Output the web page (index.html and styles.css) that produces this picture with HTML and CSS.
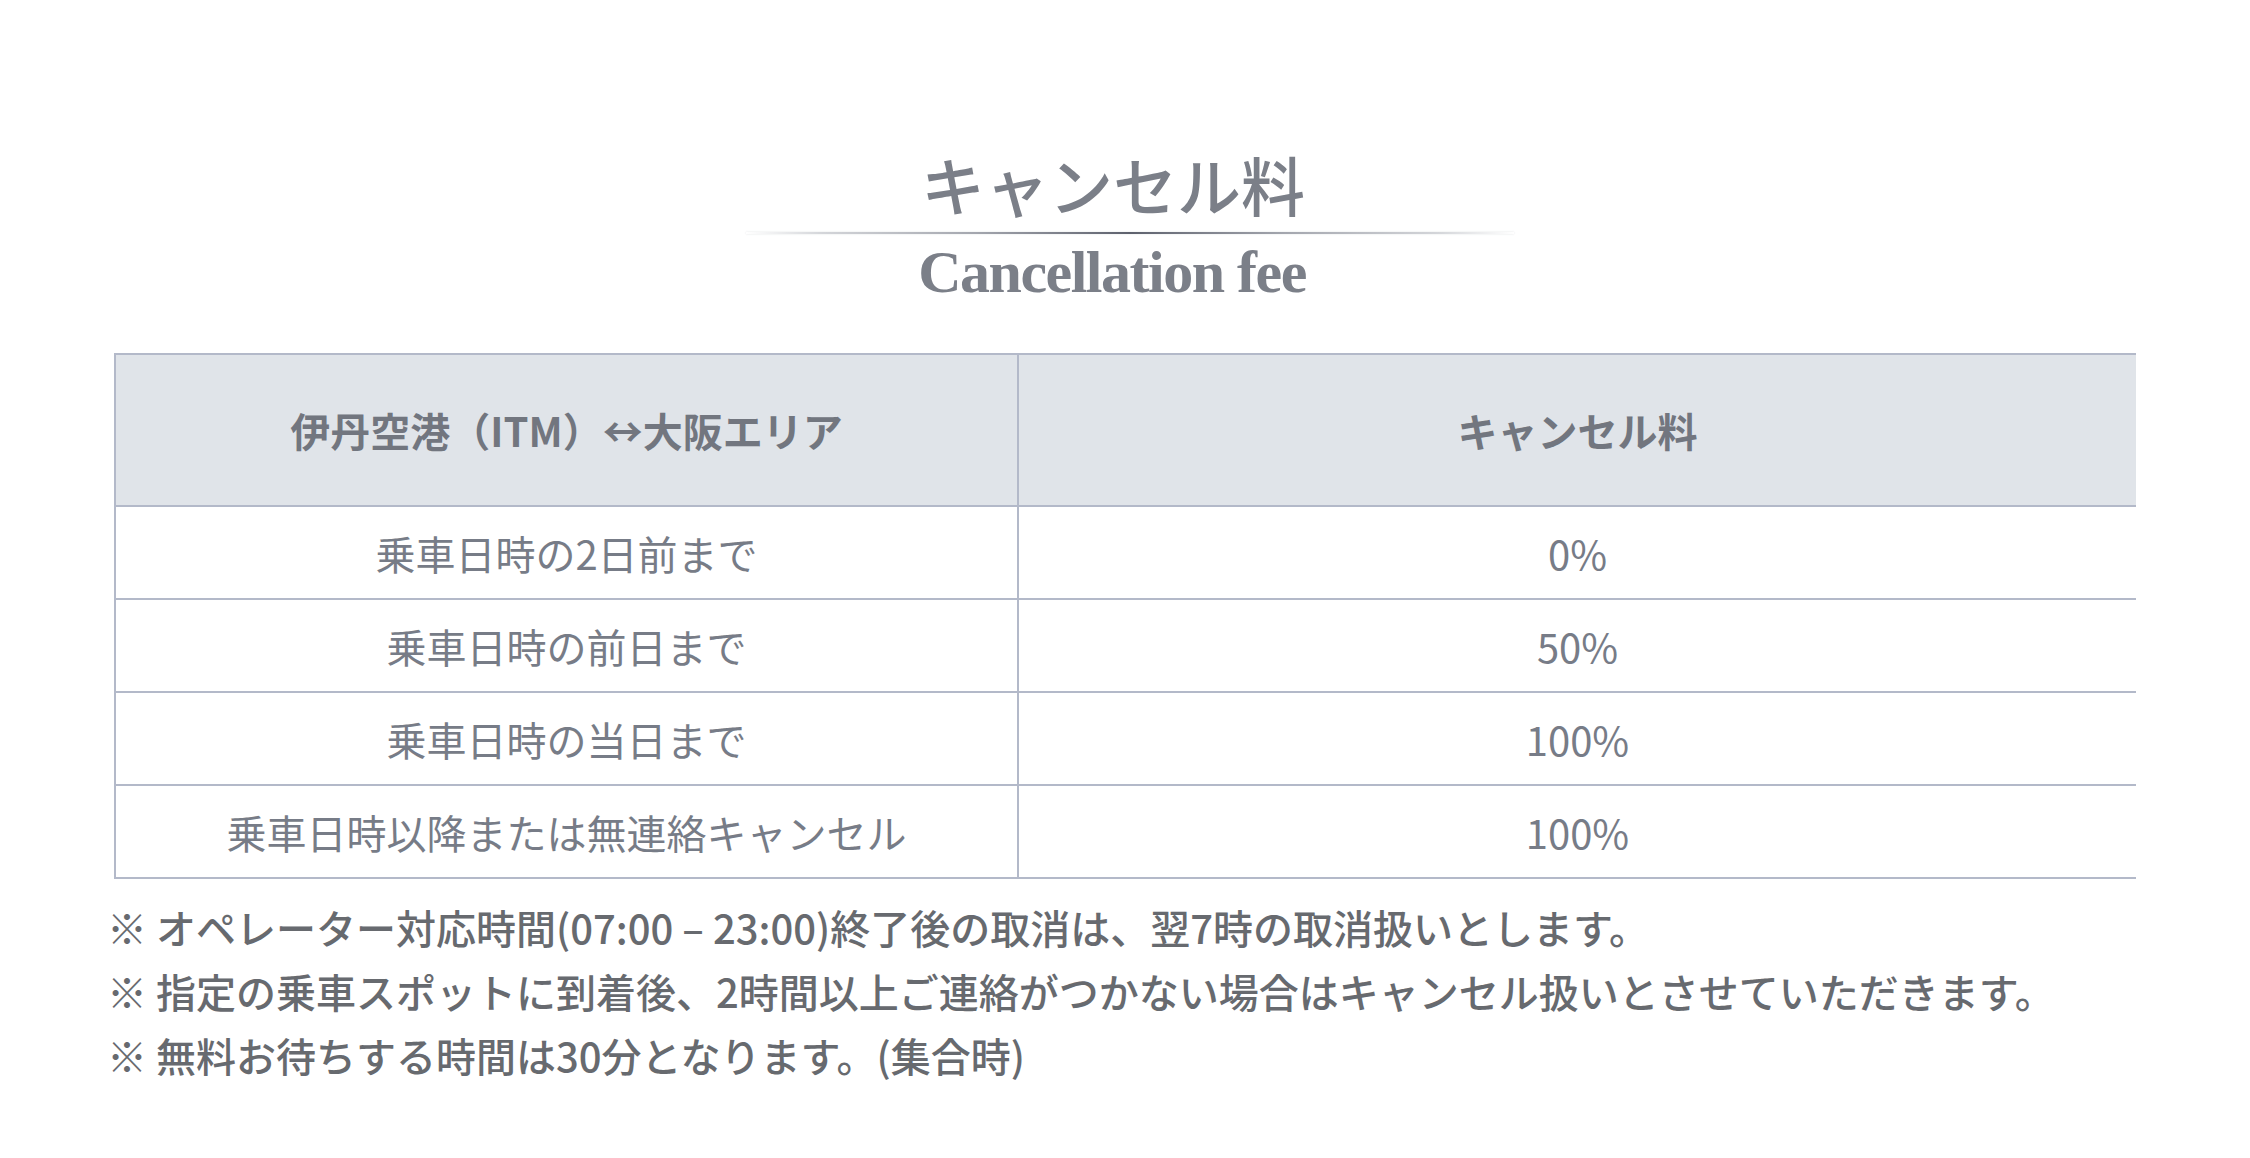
FILE: index.html
```html
<!DOCTYPE html>
<html lang="ja">
<head>
<meta charset="utf-8">
<title>キャンセル料</title>
<link rel="stylesheet" href="styles.css">
</head>
<body>
<section class="cancel">
  <header class="heading">
    <h2 class="heading-ja">キャンセル料</h2>
    <div class="heading-rule"></div>
    <p class="heading-en">Cancellation fee</p>
  </header>
  <div class="wrap">
    <table class="fee-table">
      <thead>
        <tr>
          <th class="col-a">伊丹空港（ITM）↔大阪エリア</th>
          <th class="col-b">キャンセル料</th>
        </tr>
      </thead>
      <tbody>
        <tr><td class="col-a">乗車日時の2日前まで</td><td class="col-b">0%</td></tr>
        <tr><td class="col-a">乗車日時の前日まで</td><td class="col-b">50%</td></tr>
        <tr><td class="col-a">乗車日時の当日まで</td><td class="col-b">100%</td></tr>
        <tr><td class="col-a">乗車日時以降または無連絡キャンセル</td><td class="col-b">100%</td></tr>
      </tbody>
    </table>
    <ul class="notes">
      <li>※ オペレーター対応時間(07:00 – 23:00)終了後の取消は、翌7時の取消扱いとします。</li>
      <li>※ 指定の乗車スポットに到着後、2時間以上ご連絡がつかない場合はキャンセル扱いとさせていただきます。</li>
      <li>※ 無料お待ちする時間は30分となります。(集合時)</li>
    </ul>
  </div>
</section>
</body>
</html>
```
FILE: styles.css
```css
html, body {
  margin: 0;
  padding: 0;
  background: #ffffff;
}
body {
  font-family: "Noto Sans CJK JP", "Noto Sans", sans-serif;
  color: #7a7f88;
}
.cancel {
  padding-top: 151px;
}
.heading {
  display: flex;
  flex-direction: column;
  align-items: center;
}
.heading-ja {
  margin: 0;
  padding-right: 24px;
  font-size: 64px;
  line-height: 64px;
  font-weight: 500;
  color: #7b7f88;
}
.heading-rule {
  margin-top: 17px;
  width: 768px;
  height: 2px;
  margin-left: 10px;
  background: linear-gradient(to right, rgba(200,200,205,0) 0%, #d3d5d9 10%, #a3a6ae 30%, #5d616d 50%, #a3a6ae 70%, #d3d5d9 90%, rgba(200,200,205,0) 100%);
  box-shadow: 0 0 2px rgba(90, 95, 110, 0.2);
}
.heading-en {
  margin: 8px 0 0;
  padding-right: 26px;
  font-family: "Liberation Serif", serif;
  font-weight: 700;
  font-size: 60px;
  line-height: 60px;
  letter-spacing: -1.5px;
  color: #7b7f88;
}
.wrap {
  margin-top: 51px;
  padding: 0 107px;
}
.fee-table {
  margin: 0 7px;
  width: calc(100% - 14px);
  border-collapse: collapse;
  table-layout: fixed;
}
.fee-table th,
.fee-table td {
  border: 2px solid #b3b9c9;
  text-align: center;
  vertical-align: middle;
  padding: 0;
  font-size: 40px;
}
.fee-table th {
  height: 150px;
  background: #e0e4e9;
  font-weight: 700;
  color: #72767f;
}
.fee-table td {
  height: 91px;
  font-weight: 400;
  color: #777c87;
}
.fee-table .col-a {
  width: 901px;
}
.fee-table .col-b {
  border-right: none;
}
.notes {
  list-style: none;
  margin: 16px 0 0;
  padding: 0;
  font-size: 40px;
  line-height: 64px;
  font-weight: 500;
  color: #676a6f;
}
.notes li {
  margin: 0;
}
```
